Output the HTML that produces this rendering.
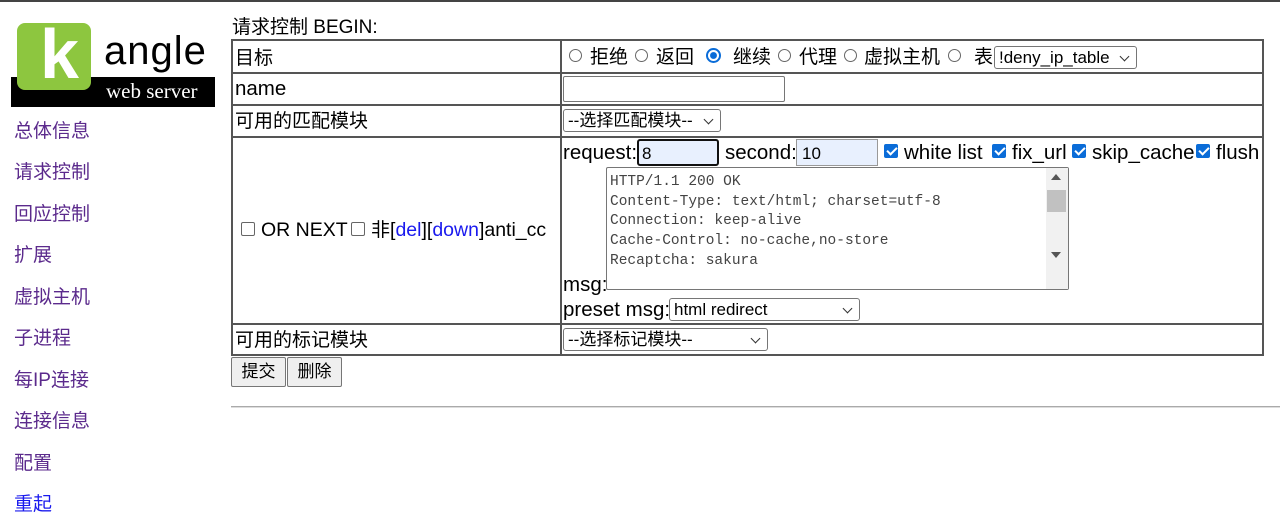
<!DOCTYPE html><html><head><meta charset="utf-8"><style>
*{box-sizing:border-box}
body{margin:0;width:1280px;height:529px;overflow:hidden;background:#fff;font-family:"Liberation Sans","Noto Sans CJK SC",sans-serif;font-size:19px;color:#000;position:relative}
.a{position:absolute;white-space:nowrap;line-height:28px}
.l{color:#5b2a8c;font-size:19px}
.hl{position:absolute;background:#555;height:2px}
.vl{position:absolute;background:#555;width:2px}
.rad{position:absolute;width:13px;height:13px;border:1px solid #666;border-radius:50%}
.radon{border:2px solid #0a6cd8;background:radial-gradient(circle,#0a6cd8 40%,#fff 48%)}
.cb{position:absolute;width:14px;height:14px;border:1px solid #666;border-radius:2px}
.cbon{background:#0a6cd8;border-color:#0a6cd8}
.cbon:after{content:"";position:absolute;left:4px;top:0px;width:4px;height:8px;border:solid #fff;border-width:0 2px 2px 0;transform:rotate(45deg)}
.sel{position:absolute;border:1px solid #767676;border-radius:3px;background:#fff;font-size:17px;padding:0 4px;line-height:21px;height:23px}
.sel:after{content:"";position:absolute;right:8px;top:6px;width:6px;height:6px;border:solid #333;border-width:0 1.5px 1.5px 0;transform:rotate(45deg)}
.btn{position:absolute;border:1px solid #767676;border-radius:2px;background:#efefef;font-size:17px;text-align:center;line-height:28px}
.e{font-size:20.5px}
</style></head><body>
<div class="a" style="left:0;top:0;width:1280px;height:2px;background:#444"></div>
<div class="a" style="left:11px;top:77px;width:204px;height:30px;background:#000"></div>
<div class="a" style="left:17px;top:23px;width:74px;height:67px;background:#8dc63f;border-radius:8px"></div>
<div class="a" style="left:40px;top:14px;font-size:70px;font-weight:bold;color:#fff;line-height:80px">k</div>
<div class="a" style="left:104px;top:28px;font-size:40px;line-height:46px;letter-spacing:1px">angle</div>
<div class="a" style="left:106px;top:78px;font-size:21px;line-height:26px;color:#fff;font-family:'Liberation Serif',serif">web server</div>
<div class="a l" style="left:14px;top:118px">总体信息</div>
<div class="a l" style="left:14px;top:159px">请求控制</div>
<div class="a l" style="left:14px;top:201px">回应控制</div>
<div class="a l" style="left:14px;top:242px">扩展</div>
<div class="a l" style="left:14px;top:284px">虚拟主机</div>
<div class="a l" style="left:14px;top:325px">子进程</div>
<div class="a l" style="left:14px;top:367px">每IP连接</div>
<div class="a l" style="left:14px;top:408px">连接信息</div>
<div class="a l" style="left:14px;top:450px">配置</div>
<div class="a l" style="left:14px;top:491px;color:#1a1aee">重起</div>
<div class="a" style="left:232px;top:14px">请求控制 BEGIN:</div>
<div class="hl" style="left:231px;top:39px;width:1033px"></div>
<div class="hl" style="left:231px;top:72px;width:1033px"></div>
<div class="hl" style="left:231px;top:104px;width:1033px"></div>
<div class="hl" style="left:231px;top:136px;width:1033px"></div>
<div class="hl" style="left:231px;top:323px;width:1033px"></div>
<div class="hl" style="left:231px;top:354px;width:1033px"></div>
<div class="vl" style="left:231px;top:39px;height:317px"></div>
<div class="vl" style="left:560px;top:39px;height:317px"></div>
<div class="vl" style="left:1262px;top:39px;height:317px"></div>
<div class="a" style="left:235px;top:45px">目标</div>
<div class="a e" style="left:235px;top:75px">name</div>
<div class="a" style="left:235px;top:108px">可用的匹配模块</div>
<div class="cb" style="left:241px;top:222px"></div>
<div class="a" style="left:261px;top:216px"><span style="font-size:19.5px">OR NEXT</span></div>
<div class="cb" style="left:351px;top:222px"></div>
<div class="a" style="left:371px;top:216px">非<span style="font-size:19.5px">[<span style="color:#1a1aee">del</span>][<span style="color:#1a1aee">down</span>]anti_cc</span></div>
<div class="a" style="left:235px;top:327px">可用的标记模块</div>
<div class="rad" style="left:569px;top:49px"></div><div class="a" style="left:590px;top:44px">拒绝</div>
<div class="rad" style="left:635px;top:49px"></div><div class="a" style="left:656px;top:44px">返回</div>
<div class="rad radon" style="left:706px;top:48px;width:15px;height:15px"></div><div class="a" style="left:733px;top:44px">继续</div>
<div class="rad" style="left:778px;top:49px"></div><div class="a" style="left:799px;top:44px">代理</div>
<div class="rad" style="left:844px;top:49px"></div><div class="a" style="left:864px;top:44px">虚拟主机</div>
<div class="rad" style="left:948px;top:49px"></div><div class="a" style="left:974px;top:44px">表</div>
<div class="sel" style="left:994px;top:46px;width:143px">!deny_ip_table</div>
<div class="a" style="left:563px;top:76px;width:222px;height:26px;border:1px solid #767676;border-radius:2px"></div>
<div class="sel" style="left:563px;top:109px;width:158px">--选择匹配模块--</div>
<div class="a e" style="left:563px;top:139px">request:</div>
<div class="a" style="left:637px;top:139px;width:82px;height:27px;border:2px solid #111;border-radius:3px;background:#e8f0fe;font-size:17px;padding:2px 3px;line-height:21px">8</div>
<div class="a e" style="left:725px;top:139px">second:</div>
<div class="a" style="left:796px;top:139px;width:82px;height:27px;border:1px solid #999;background:#e8f0fe;font-size:17px;padding:3px 5px;line-height:21px">10</div>
<div class="cb cbon" style="left:884px;top:144px"></div><div class="a e" style="left:904px;top:139px">white list</div>
<div class="cb cbon" style="left:992px;top:144px"></div><div class="a e" style="left:1012px;top:139px">fix_url</div>
<div class="cb cbon" style="left:1072px;top:144px"></div><div class="a e" style="left:1092px;top:139px">skip_cache</div>
<div class="cb cbon" style="left:1196px;top:144px"></div><div class="a e" style="left:1216px;top:139px">flush</div>
<div class="a" style="left:606px;top:167px;width:463px;height:123px;border:1px solid #767676;border-radius:2px;font-family:'Liberation Mono',monospace;font-size:14.5px;color:#444;padding:5px 3px"><div style="line-height:19.7px">HTTP/1.1 200 OK<br>Content-Type: text/html; charset=utf-8<br>Connection: keep-alive<br>Cache-Control: no-cache,no-store<br>Recaptcha: sakura</div></div>
<div class="a" style="left:1046px;top:168px;width:22px;height:121px;background:#f1f1f1"></div>
<div class="a" style="left:1047px;top:190px;width:19px;height:22px;background:#c1c1c1"></div>
<div class="a" style="left:1051px;top:174px;width:0;height:0;border:5px solid transparent;border-bottom:6px solid #555;border-top:0"></div>
<div class="a" style="left:1051px;top:252px;width:0;height:0;border:5px solid transparent;border-top:6px solid #555;border-bottom:0"></div>
<div class="a e" style="left:563px;top:271px">msg:</div>
<div class="a e" style="left:563px;top:296px">preset msg:</div>
<div class="sel" style="left:669px;top:298px;width:191px">html redirect</div>
<div class="sel" style="left:563px;top:328px;width:205px">--选择标记模块--</div>
<div class="btn" style="left:231px;top:357px;width:55px;height:30px">提交</div>
<div class="btn" style="left:287px;top:357px;width:55px;height:30px">删除</div>
<div class="a" style="left:231px;top:406px;width:1049px;height:2px;background:#aaa;border-bottom:1px solid #ddd"></div>
</body></html>
